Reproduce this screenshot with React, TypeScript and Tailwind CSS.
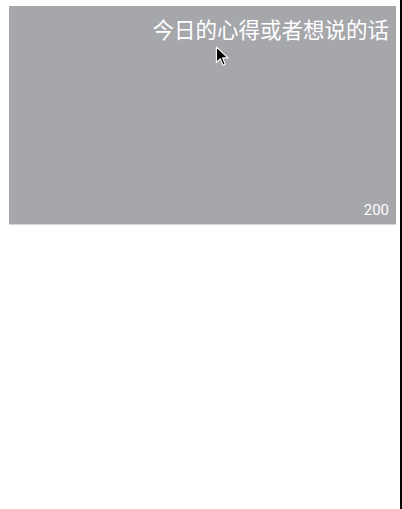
import React from "react";

const App: React.FC = () => {
  return (
    <div
      className="relative min-h-screen w-full border-r-2 border-black bg-white pt-[6px] pl-[9px] pr-[4px]"
      style={{ fontFamily: '"Noto Sans CJK SC", "Noto Sans", sans-serif' }}
    >
      <div className="relative flex h-[219px] w-[387px] flex-col justify-between border-b border-[#d4d5d8] bg-[#a6a7ab] pr-[7px] pt-[8px] pb-[4px]">
        <div className="text-right text-[21.5px] leading-[30px] text-white">
          今日的心得或者想说的话
        </div>
        <div
          className="text-right text-[15px] leading-[20px] text-white"
          style={{ fontFamily: 'Roboto, "Noto Sans", sans-serif' }}
        >
          200
        </div>
      </div>
      <svg
        className="absolute left-[215px] top-[46px]"
        width="16"
        height="22"
        viewBox="0 0 14 20"
      >
        <path
          d="M1 1 L1 15 L4.5 11.5 L7 17.5 L9 16.6 L6.6 10.8 L11.5 10.8 Z"
          fill="black"
          stroke="white"
          strokeWidth="1"
          strokeLinejoin="round"
        />
      </svg>
    </div>
  );
};

export default App;
